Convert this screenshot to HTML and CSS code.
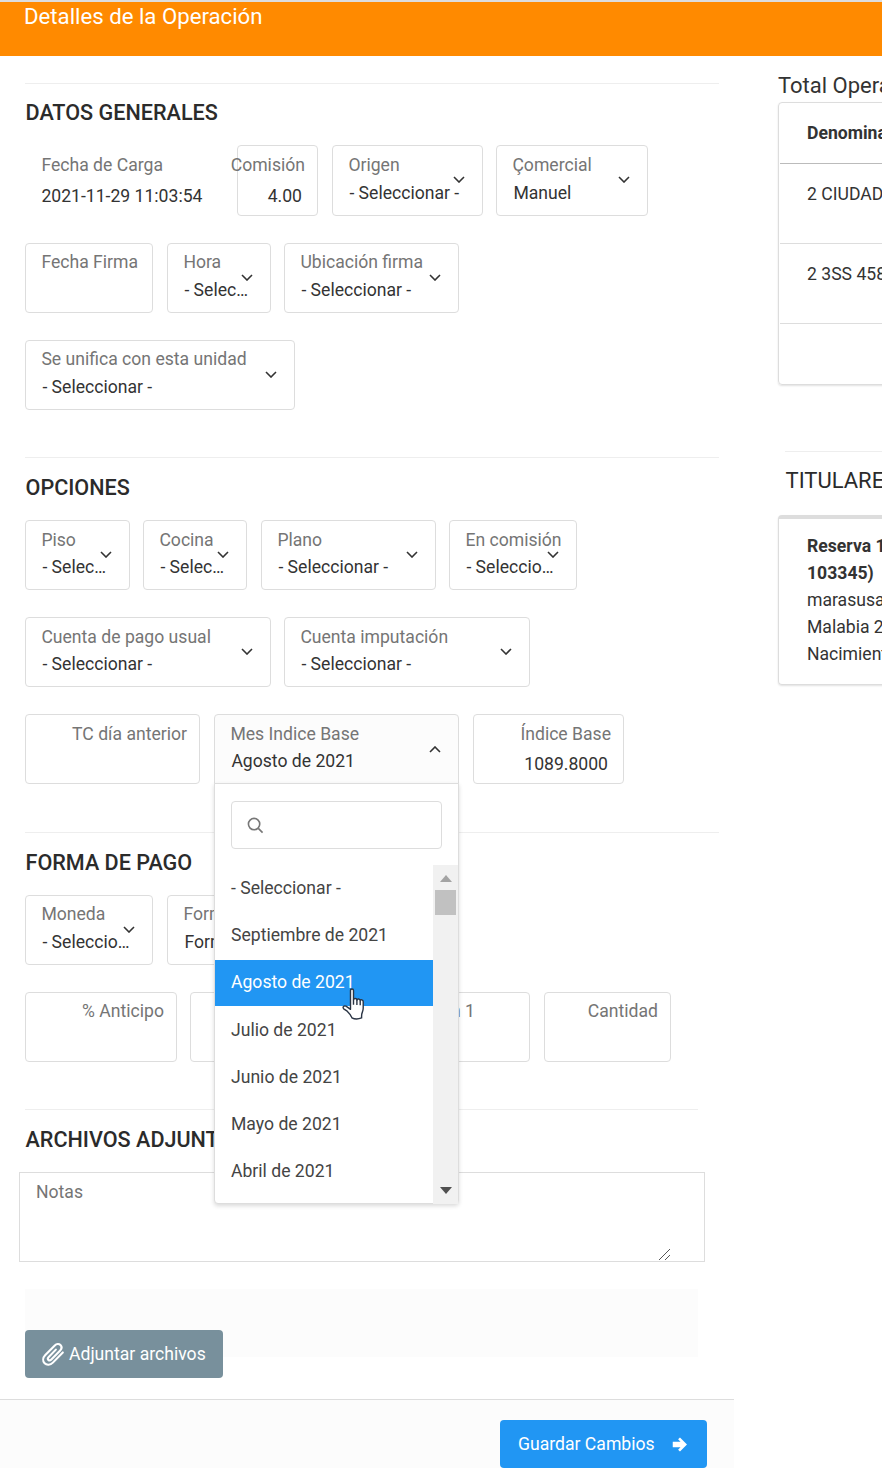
FILE: index.html
```html
<!DOCTYPE html>
<html lang="es">
<head>
<meta charset="utf-8">
<title>Detalles de la Operación</title>
<link rel="stylesheet" href="styles.css">
</head>
<body>
<header class="topbar"><h1>Detalles de la Operación</h1></header>
<div class="layout">
  <main class="main">
    <div class="body-pad">
      <section class="section s-first">
        <h2>DATOS GENERALES</h2>
        <div class="row row-tall">
          <div class="field plain w199"><span class="lab">Fecha de Carga</span><span class="val inp">2021-11-29 11:03:54</span></div>
          <div class="field num w81 mr1"><span class="lab">Comisión</span><span class="val inp">4.00</span></div>
          <div class="field sel w151"><span class="lab">Origen</span><span class="val">- Seleccionar -</span><svg class="chev" viewBox="0 0 12 7"><path d="M1 1l5 5 5-5"/></svg></div>
          <div class="field sel w152"><span class="lab">Çomercial</span><span class="val">Manuel</span><svg class="chev" viewBox="0 0 12 7"><path d="M1 1l5 5 5-5"/></svg></div>
        </div>
        <div class="row">
          <div class="field w128 mr1"><span class="lab">Fecha Firma</span></div>
          <div class="field sel w104"><span class="lab">Hora</span><span class="val">- Seleccionar -</span><svg class="chev" viewBox="0 0 12 7"><path d="M1 1l5 5 5-5"/></svg></div>
          <div class="field sel w175"><span class="lab">Ubicación firma</span><span class="val">- Seleccionar -</span><svg class="chev" viewBox="0 0 12 7"><path d="M1 1l5 5 5-5"/></svg></div>
        </div>
        <div class="row">
          <div class="field sel w270"><span class="lab">Se unifica con esta unidad</span><span class="val">- Seleccionar -</span><svg class="chev" viewBox="0 0 12 7"><path d="M1 1l5 5 5-5"/></svg></div>
        </div>
      </section>

      <section class="section s-opc">
        <h2>OPCIONES</h2>
        <div class="row">
          <div class="field sel w105"><span class="lab">Piso</span><span class="val">- Seleccionar -</span><svg class="chev" viewBox="0 0 12 7"><path d="M1 1l5 5 5-5"/></svg></div>
          <div class="field sel w104 mr1"><span class="lab">Cocina</span><span class="val">- Seleccionar -</span><svg class="chev" viewBox="0 0 12 7"><path d="M1 1l5 5 5-5"/></svg></div>
          <div class="field sel w175"><span class="lab">Plano</span><span class="val">- Seleccionar -</span><svg class="chev" viewBox="0 0 12 7"><path d="M1 1l5 5 5-5"/></svg></div>
          <div class="field sel w128"><span class="lab">En comisión</span><span class="val">- Seleccionar -</span><svg class="chev" viewBox="0 0 12 7"><path d="M1 1l5 5 5-5"/></svg></div>
        </div>
        <div class="row">
          <div class="field sel w246"><span class="lab">Cuenta de pago usual</span><span class="val">- Seleccionar -</span><svg class="chev" viewBox="0 0 12 7"><path d="M1 1l5 5 5-5"/></svg></div>
          <div class="field sel w246"><span class="lab">Cuenta imputación</span><span class="val">- Seleccionar -</span><svg class="chev" viewBox="0 0 12 7"><path d="M1 1l5 5 5-5"/></svg></div>
        </div>
        <div class="row">
          <div class="field num w175 mr1"><span class="lab">TC día anterior</span></div>
          <div class="field sel open w245 mr1">
            <span class="lab">Mes Indice Base</span><span class="val">Agosto de 2021</span>
            <svg class="chev" viewBox="0 0 12 7"><path d="M1 6l5-5 5 5"/></svg>
            <div class="dropdown">
              <div class="search">
                <svg class="search-ico" viewBox="0 0 18 18"><circle cx="7.5" cy="7.5" r="6"/><path d="M12 12l4.500 4.500"/></svg>
              </div>
              <div class="listwrap">
                <ul class="list">
                  <li>- Seleccionar -</li>
                  <li>Septiembre de 2021</li>
                  <li class="active">Agosto de 2021</li>
                  <li>Julio de 2021</li>
                  <li>Junio de 2021</li>
                  <li>Mayo de 2021</li>
                  <li>Abril de 2021</li>
                </ul>
                <div class="scrollbar">
                  <svg class="arrow-up" viewBox="0 0 12 7"><path d="M6 0l6 7H0z"/></svg>
                  <div class="thumb"></div>
                  <svg class="arrow-down" viewBox="0 0 12 7"><path d="M0 0h12L6 7z"/></svg>
                </div>
              </div>
              <svg class="hand" viewBox="0 0 24 32"><path d="M8.500 2.600c0-2.200 3-2.200 3 0v9.200c.2-1.800 3.300-1.700 3.400.2.300-1.500 3.100-1.300 3.300.6.500-1.300 3-.9 3 1.100v6.300c0 1.700-.3 3.100-.9 4.400-.5 1.100-.7 2.100-.7 3.600v1.900c-3.600 1.400-7 1.300-9.700-.1-.8-2.700-2.500-4.500-4.700-6.600L1.700 20.800c-1.500-1.600.3-3.700 2.300-2.600l4.500 3.100z"/><path class="h2" d="M11.500 11.800v5M14.900 12v5M18.200 12.800v4.500"/></svg>
            </div>
          </div>
          <div class="field num w151"><span class="lab">Índice Base</span><span class="val inp">1089.8000</span></div>
        </div>
      </section>

      <section class="section">
        <h2>FORMA DE PAGO</h2>
        <div class="row">
          <div class="field sel w128 mr1"><span class="lab">Moneda</span><span class="val">- Seleccionar -</span><svg class="chev" viewBox="0 0 12 7"><path d="M1 1l5 5 5-5"/></svg></div>
          <div class="field w163"><span class="lab">Forma de pago</span><span class="val">Forma</span></div>
        </div>
        <div class="row">
          <div class="field num w152"><span class="lab">% Anticipo</span></div>
          <div class="field num w142"><span class="lab">Anticipo</span></div>
          <div class="field w185 mr1"><span class="lab">Financiación 1</span></div>
          <div class="field num w127"><span class="lab">Cantidad</span></div>
        </div>
      </section>

      <section class="section s-narrow">
        <h2>ARCHIVOS ADJUNTOS</h2>
      </section>
      <div class="notes">
        <span class="notes-label">Notas</span>
        <svg class="grip" viewBox="0 0 11 11"><path d="M0 11L11 0M6 11l5-5"/></svg>
      </div>
      <div class="attach">
        <button class="btn btn-gray">
          <svg class="clip" viewBox="0 0 22 22"><path d="M19.300 9.700l-8.400 8.600c-2.200 2.200-5.200 2.400-7 .6-1.800-1.800-1.500-4.800.6-7l8-8.100c1.500-1.500 3.500-1.700 4.800-.4 1.300 1.300 1.100 3.300-.4 4.800l-7.300 7.500c-.8.800-1.900.9-2.500.3-.6-.6-.5-1.700.3-2.500l6-6.200"/></svg>
          Adjuntar archivos
        </button>
      </div>
    </div>
    <footer class="footer">
      <button class="btn btn-blue">Guardar Cambios
        <svg class="arrow" viewBox="0 0 16 15"><path d="M8.500 0L16 7.500 8.500 15l-2-2 2.600-2.600H.8V4.600h8.300L6.500 2z"/></svg>
      </button>
    </footer>
  </main>
  <aside class="aside">
    <h3 class="total">Total Operación</h3>
    <div class="card table-card">
      <div class="t-head">Denominación</div>
      <div class="t-row">2 CIUDAD DE LA PAZ</div>
      <div class="t-row">2 3SS 4589 PISO 2</div>
      <div class="t-foot"></div>
    </div>
    <div class="tit">
      <h2>TITULARES</h2>
      <div class="card holder">
        <strong>Reserva 1 (Cliente:</strong>
        <strong>103345)</strong>
        <span>marasusana@correo.com</span>
        <span>Malabia 2045, CABA</span>
        <span>Nacimiento: 12/03/1970</span>
      </div>
    </div>
  </aside>
</div>
</body>
</html>
```

FILE: styles.css
```css
* { box-sizing: border-box; }
html, body { margin: 0; padding: 0; }
body {
  width: 882px;
  height: 1468px;
  overflow: hidden;
  background: #fff;
  color: #333;
  font-family: Roboto, "Liberation Sans", sans-serif;
  font-size: 17.6px;
}
.topbar {
  height: 56px;
  background: #ff8a00;
  border-top: 2px solid #ddd;
  padding-left: 24px;
}
.topbar h1 {
  margin: 0;
  color: #fff;
  font-size: 22.2px;
  font-weight: 400;
  line-height: 29px;
}
.layout { display: flex; align-items: flex-start; width: 1300px; }
.main { width: 734px; flex: none; height: 1412px; display: flex; flex-direction: column; }
.body-pad { padding: 27px 0 0 25px; height: 1343px; }
.section { width: 694px; border-top: 1px solid #eee; padding-top: 15px; margin-bottom: 47px; }
.s-first { padding-top: 14px; }
.s-opc { margin-bottom: 48px; }
.s-narrow { width: 673px; margin-bottom: 0; }
h2 {
  margin: 0 0 17px .5px;
  font-size: 22px;
  font-weight: 500;
  line-height: 30px;
  color: #2b2b2b;
}
.section h2 { font-size: 21.6px; }
.row { display: flex; gap: 13px; margin-bottom: 27px; }
.row:last-child { margin-bottom: 0; }
.field {
  position: relative;
  flex: none;
  height: 70px;
  border: 1px solid #ddd;
  border-radius: 4px;
  padding: 6px 20px 0 15.4px;
  background: #fff;
}
.row-tall .field { height: 71px; padding-top: 7px; }
.plain { border-color: transparent; padding-right: 0; }
.lab, .val {
  display: block;
  white-space: nowrap;
  line-height: 25px;
}
.lab { color: #757575; }
.val {
  margin: 3px 0 0 1px;
  overflow: hidden;
  text-overflow: ellipsis;
  color: #333;
}
.val.inp { margin: 6px 0 0 0; }
.num { padding: 6px 15px 0 16px; text-align: right; }
.num .lab { display: flex; justify-content: flex-end; margin-right: -3px; }
.plain .lab, .plain .val { text-align: left; }
.s-opc .field { padding-top: 7px; }
.s-opc .val { margin-top: 2px; }
.s-opc .val.inp { margin-top: 5px; }
.mr1 { margin-right: 1px; }
.w81 { width: 81px; }
.w104 { width: 104px; }
.w105 { width: 105px; }
.w127 { width: 127px; }
.w128 { width: 128px; }
.w142 { width: 142px; }
.w151 { width: 151px; }
.w152 { width: 152px; }
.w163 { width: 163px; }
.w175 { width: 175px; }
.w185 { width: 185px; }
.w199 { width: 199px; }
.w245 { width: 245px; }
.w246 { width: 246px; }
.w270 { width: 270px; }
.chev {
  position: absolute;
  right: 17px;
  top: 30px;
  width: 12px;
  height: 7px;
  fill: none;
  stroke: #333;
  stroke-width: 1.6;
}
.open { background: #fcfcfc; border-radius: 4px 4px 0 0; z-index: 5; }
.open .chev { top: 31px; }
.dropdown {
  position: absolute;
  left: -1px;
  top: 68px;
  width: 245px;
  height: 421px;
  background: #fff;
  border: 1px solid #ddd;
  border-radius: 0 0 4px 4px;
  box-shadow: 0 2px 4px rgba(0,0,0,.15);
}
.search {
  position: relative;
  height: 48px;
  margin: 17px 16px 16px;
  border: 1px solid #ddd;
  border-radius: 4px;
}
.search-ico {
  position: absolute;
  left: 15px;
  top: 15px;
  width: 17px;
  height: 17px;
  fill: none;
  stroke: #777;
  stroke-width: 1.7;
}
.listwrap { display: flex; height: 339px; }
.list { list-style: none; margin: 0; padding: 0; width: 218px; flex: none; color: #444; }
.list li { height: 47px; line-height: 46px; padding-left: 16px; }
.list .active { height: 46px; line-height: 44px; background: #2196f3; color: #fff; margin-top: 1px; }
.list .active ~ li { line-height: 48px; }
.scrollbar { width: 25px; background: #f1f1f1; display: flex; flex-direction: column; align-items: center; position: relative; }
.arrow-up { width: 12px; height: 7px; margin-top: 10px; fill: #a3a3a3; }
.thumb { width: 21px; height: 25px; background: #c1c1c1; margin-top: 8px; }
.arrow-down { position: absolute; bottom: 10px; width: 12px; height: 7px; fill: #505050; }
.hand {
  position: absolute;
  left: 127px;
  top: 204px;
  width: 24px;
  height: 32px;
  fill: #fff;
  stroke: #2a3444;
  stroke-width: 1.4;
  stroke-linejoin: round;
}
.hand .h2 { fill: none; }
.notes {
  position: relative;
  width: 686px;
  height: 90px;
  margin: 16px 0 0 -6px;
  border: 1px solid #ddd;
  padding: 7px 16px;
}
.notes-label { color: #757575; line-height: 25px; }
.grip {
  position: absolute;
  right: 34px;
  bottom: 1px;
  width: 11px;
  height: 11px;
  fill: none;
  stroke: #555;
  stroke-width: 1;
}
.attach {
  width: 673px;
  height: 68px;
  margin-top: 27px;
  background: #fcfcfc;
  padding-top: 41px;
}
.btn {
  display: inline-flex;
  align-items: center;
  height: 48px;
  border: 0;
  border-radius: 4px;
  color: #fff;
  font: 400 17.6px Roboto, "Liberation Sans", sans-serif;
}
.btn-gray { width: 198px; background: #78909c; padding: 0 0 0 15px; gap: 3px; }
.clip { width: 26px; height: 26px; fill: none; stroke: #fff; stroke-width: 1.8; stroke-linecap: round; }
.footer {
  flex: 1;
  border-top: 1px solid #ddd;
  background: #fcfcfc;
  padding: 20px 0 0 500px;
}
.btn-blue { width: 207px; background: #2196f3; padding: 0 0 0 18px; border-radius: 4px; }
.arrow { width: 15px; height: 15px; margin-left: 17px; fill: #fff; }
.aside { width: 500px; margin-left: 44px; }
.total { margin: 14px 0 0 0; font-size: 22px; font-weight: 400; line-height: 32px; color: #333; }
.card {
  border: 1px solid #ddd;
  border-radius: 4px;
  box-shadow: 0 1px 2px rgba(0,0,0,.12);
  width: 480px;
}
.table-card { height: 283px; white-space: nowrap; }
.t-head { height: 61px; line-height: 60px; padding-left: 27px; font-weight: 700; border-bottom: 1px solid #bbb; margin-left: 1px; }
.t-row { height: 80px; padding: 16px 0 0 27px; line-height: 28px; border-bottom: 1px solid #ddd; margin-left: 1px; color: #333; }
.tit { margin: 66px 0 0 7px; border-top: 1px solid #eee; padding-top: 14px; }
.tit h2 { margin: 0 0 19px .5px; font-weight: 400; font-size: 22px; }
.holder {
  margin-left: -7px;
  height: 170px;
  border-top: 4px solid #ddd;
  padding: 14px 0 0 28px;
  display: flex;
  flex-direction: column;
  line-height: 27px;
  white-space: nowrap;
}
```
